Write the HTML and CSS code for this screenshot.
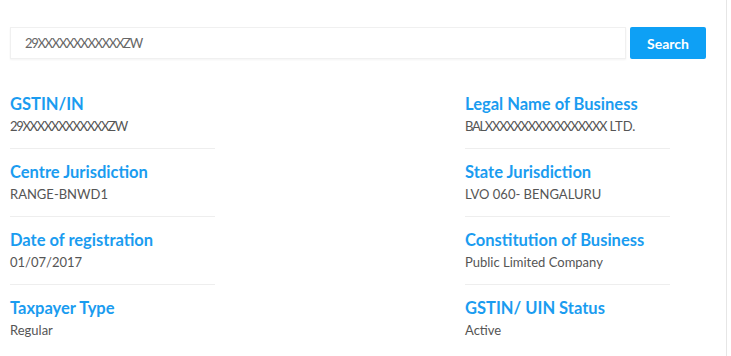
FILE: index.html
```html
<!DOCTYPE html>
<html lang="en">
<head>
    <meta charset="UTF-8">
    <meta name="viewport" content="width=device-width, initial-scale=1.0">
    <title>Search Taxpayer</title>
    <link rel="stylesheet" href="styles.css">
</head>
<body>
    <div class="panel">
        <div class="search-bar">
            <input type="text" class="search-input masked" value="29XXXXXXXXXXXXZW">
            <button class="search-btn">Search</button>
        </div>

        <div class="details">
            <div class="field">
                <p class="label">GSTIN/IN</p>
                <p class="value masked">29XXXXXXXXXXXXZW</p>
            </div>
            <div class="field">
                <p class="label">Legal Name of Business</p>
                <p class="value"><span class="masked">BALXXXXXXXXXXXXXXXXX</span> LTD.</p>
            </div>
            <div class="field">
                <p class="label">Centre Jurisdiction</p>
                <p class="value">RANGE-BNWD1</p>
            </div>
            <div class="field">
                <p class="label">State Jurisdiction</p>
                <p class="value">LVO 060- BENGALURU</p>
            </div>
            <div class="field">
                <p class="label">Date of registration</p>
                <p class="value">01/07/2017</p>
            </div>
            <div class="field">
                <p class="label">Constitution of Business</p>
                <p class="value">Public Limited Company</p>
            </div>
            <div class="field last">
                <p class="label">Taxpayer Type</p>
                <p class="value">Regular</p>
            </div>
            <div class="field last">
                <p class="label">GSTIN/ UIN Status</p>
                <p class="value">Active</p>
            </div>
        </div>
    </div>
</body>
</html>
```

FILE: styles.css
```css
* {
    margin: 0;
    padding: 0;
    box-sizing: border-box;
}

body {
    background: #fff;
    font-family: 'Lato', 'Open Sans', sans-serif;
}

.panel {
    width: 727px;
    height: 356px;
    overflow: hidden;
    border-right: 1px solid #e6e6e6;
    padding: 27px 20px 0 10px;
}

/* Search row */
.search-bar {
    display: flex;
    gap: 4px;
}

.search-input {
    flex: 1;
    height: 32px;
    padding: 0 14px;
    border: 1px solid #f0f0f0;
    box-shadow: 0 1px 2px rgba(0, 0, 0, 0.05);
    font-family: inherit;
    font-size: 13px;
    color: #666;
    outline: none;
}

.search-btn {
    width: 76px;
    height: 32px;
    border: none;
    border-radius: 2px;
    background-color: #0ea0f5;
    color: #fff;
    font-family: inherit;
    font-size: 14px;
    font-weight: 700;
}

/* Details grid */
.details {
    display: grid;
    grid-template-columns: 205px 205px;
    column-gap: 250px;
    margin-top: 35px;
}

.field {
    border-bottom: 1px solid #eee;
    padding-bottom: 13px;
    margin-bottom: 13px;
}

.field.last {
    border-bottom: none;
}

.label {
    font-size: 16.5px;
    line-height: 20px;
    font-weight: 700;
    color: #1a9cf0;
    white-space: nowrap;
}

.value {
    margin-top: 3px;
    font-size: 13px;
    line-height: 18px;
    color: #555;
    white-space: nowrap;
}

/* masked ids use narrow, tightly packed X's */
.masked {
    letter-spacing: -1.3px;
}
```
